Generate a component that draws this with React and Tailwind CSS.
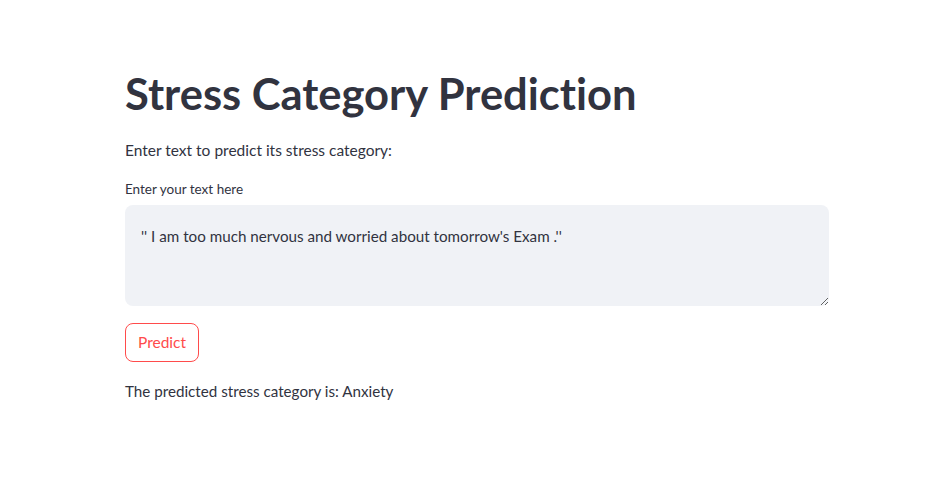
import { useState } from 'react';

const font = { fontFamily: '"Source Sans Pro", Lato, "Noto Sans", sans-serif' };

export default function App() {
  const [text, setText] = useState("'' I am too much nervous and worried about tomorrow's Exam .''");

  return (
    <div className="min-h-screen bg-white text-[#31333f]" style={font}>
      <div className="w-[704px] ml-[125px] pt-[68px]">
        {/* Title */}
        <h1 className="text-[43.5px] font-bold leading-[50px] [font-variant-ligatures:none]">Stress Category Prediction</h1>

        <p className="mt-[20px] text-[15.5px] leading-[24px]">Enter text to predict its stress category:</p>

        {/* Text area */}
        <label className="block mt-[17px] text-[13.5px] leading-[20px]">Enter your text here</label>
        <textarea
          value={text}
          onChange={(e) => setText(e.target.value)}
          className="mt-[6px] block w-full h-[101px] rounded-lg bg-[#f0f2f6] px-4 py-[19px] text-[15.2px] leading-[24px] text-[#31333f] outline-none resize-y"
          style={font}
        />

        <button className="mt-[17px] h-[39px] px-[12px] rounded-lg border border-[#ff4b4b] bg-white text-[15.5px] text-[#ff4b4b]" style={font}>
          Predict
        </button>

        <p className="mt-[17px] text-[15.2px] leading-[24px]">The predicted stress category is: Anxiety</p>
      </div>
    </div>
  );
}
